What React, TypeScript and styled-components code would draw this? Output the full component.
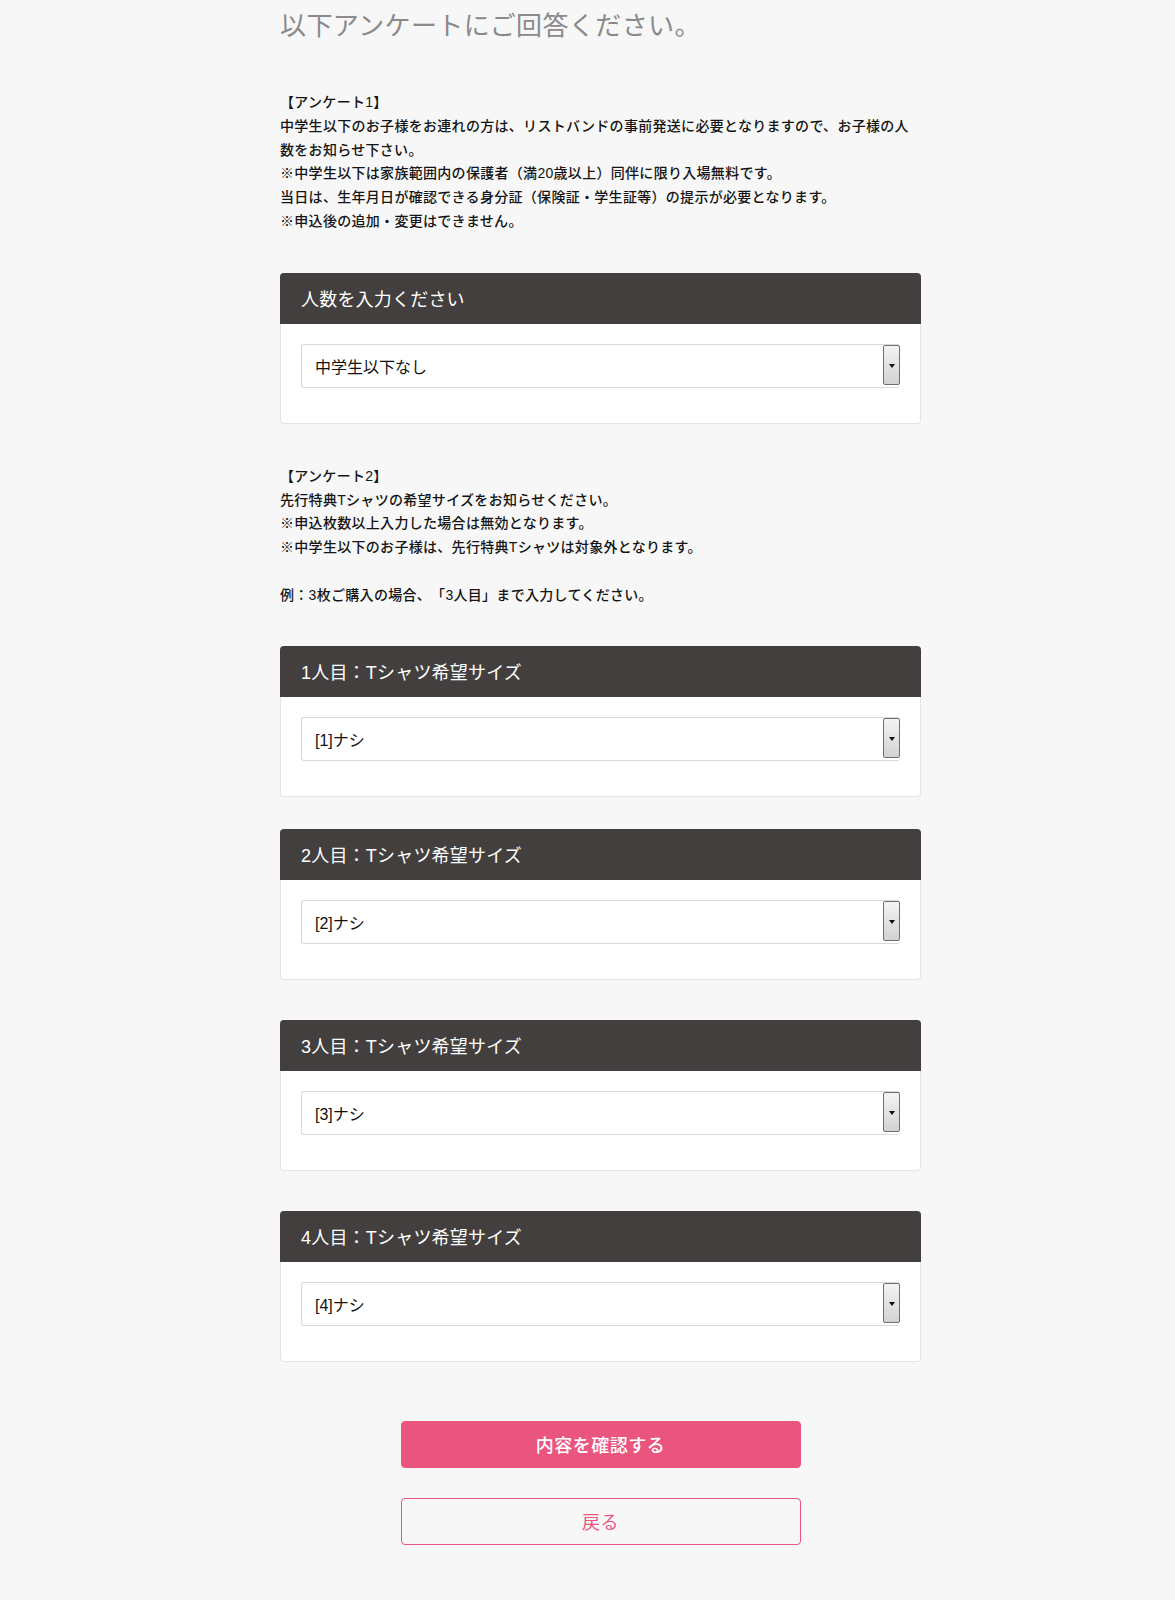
import React from "react";
import styled, { createGlobalStyle } from "styled-components";

const GlobalStyle = createGlobalStyle`
  html, body {
    margin: 0;
    padding: 0;
    background: #f7f7f7;
  }
  body {
    font-family: "Liberation Sans", "Noto Sans CJK JP", sans-serif;
    color: #161616;
    text-spacing-trim: space-all;
  }
`;

const Main = styled.main`
  width: 641px;
  margin-left: 280px;
  padding: 8px 0 55px;
  display: flex;
  flex-direction: column;
`;

const Title = styled.h1`
  margin: 0;
  font-size: 26px;
  font-weight: 400;
  line-height: 36px;
  color: #8a8a8a;
  letter-spacing: 0.4px;
`;

const Note = styled.div<{ $top: number }>`
  margin-top: ${(p) => p.$top}px;
  width: 636px;
  font-size: 14px;
  font-weight: 500;
  line-height: 23.8px;
  letter-spacing: 0.3px;
  color: #141414;
`;

const Line = styled.p`
  margin: 0;
  min-height: 23.8px;
`;

const Card = styled.section<{ $top: number }>`
  margin-top: ${(p) => p.$top}px;
  background: #fff;
  border: 1px solid #e4e4e4;
  border-top: none;
  border-radius: 4px;
`;

const CardHeader = styled.h2`
  margin: 0 -1px;
  height: 51px;
  padding: 0 21px;
  display: flex;
  align-items: center;
  background: #433f3e;
  border-radius: 4px 4px 0 0;
  color: #fff;
  font-size: 18px;
  font-weight: 400;
  letter-spacing: 0.2px;
`;

const CardBody = styled.div`
  padding: 20px 20px 35px;
`;

const SelectBox = styled.div`
  height: 44px;
  box-sizing: border-box;
  display: flex;
  align-items: stretch;
  background: #fff;
  border: 1px solid #d9d9d9;
  border-right: none;
  border-radius: 3px;
`;

const SelectValue = styled.span`
  flex: 1;
  display: flex;
  align-items: center;
  padding-left: 13px;
  font-size: 16px;
  color: #111;
`;

const ArrowButton = styled.span`
  width: 17px;
  box-sizing: border-box;
  margin: 0 0 2px;
  display: flex;
  align-items: center;
  justify-content: center;
  border: 1px solid #6f6f6f;
  border-radius: 2px;
  background: linear-gradient(#f4f4f4, #d2d2d2);

  &::after {
    content: "";
    border-left: 3.5px solid transparent;
    border-right: 3.5px solid transparent;
    border-top: 4px solid #111;
    margin-top: 2px;
  }
`;

const Actions = styled.div`
  margin-top: 59px;
  display: flex;
  flex-direction: column;
  align-items: center;
  gap: 30px;
`;

const Button = styled.button<{ $primary?: boolean }>`
  width: 400px;
  height: 47px;
  box-sizing: border-box;
  border-radius: 4px;
  border: 1px solid #e9557f;
  background: ${(p) => (p.$primary ? "#e9557f" : "transparent")};
  color: ${(p) => (p.$primary ? "#fff" : "#e9557f")};
  font-family: inherit;
  font-size: 18px;
  font-weight: ${(p) => (p.$primary ? 500 : 400)};
  letter-spacing: 0.5px;
  cursor: pointer;
`;

const note1 = [
  "【アンケート1】",
  "中学生以下のお子様をお連れの方は、リストバンドの事前発送に必要となりますので、お子様の人数をお知らせ下さい。",
  "※中学生以下は家族範囲内の保護者（満20歳以上）同伴に限り入場無料です。",
  "当日は、生年月日が確認できる身分証（保険証・学生証等）の提示が必要となります。",
  "※申込後の追加・変更はできません。",
];

const note2 = [
  "【アンケート2】",
  "先行特典Tシャツの希望サイズをお知らせください。",
  "※申込枚数以上入力した場合は無効となります。",
  "※中学生以下のお子様は、先行特典Tシャツは対象外となります。",
  "",
  "例：3枚ご購入の場合、「3人目」まで入力してください。",
];

const shirts = [
  { n: 1, top: 38 },
  { n: 2, top: 32 },
  { n: 3, top: 40 },
  { n: 4, top: 40 },
];

type SelectCardProps = {
  title: string;
  value: string;
  top: number;
};

function SelectCard({ title, value, top }: SelectCardProps) {
  return (
    <Card $top={top}>
      <CardHeader>{title}</CardHeader>
      <CardBody>
        <SelectBox>
          <SelectValue>{value}</SelectValue>
          <ArrowButton />
        </SelectBox>
      </CardBody>
    </Card>
  );
}

export default function App() {
  return (
    <>
      <GlobalStyle />
      <Main>
        <Title>以下アンケートにご回答ください。</Title>
        <Note $top={47}>
          {note1.map((l, i) => (
            <Line key={i}>{l}</Line>
          ))}
        </Note>
        <SelectCard title="人数を入力ください" value="中学生以下なし" top={39} />
        <Note $top={41}>
          {note2.map((l, i) => (
            <Line key={i}>{l}</Line>
          ))}
        </Note>
        {shirts.map((s) => (
          <SelectCard
            key={s.n}
            title={`${s.n}人目：Tシャツ希望サイズ`}
            value={`[${s.n}]ナシ`}
            top={s.top}
          />
        ))}
        <Actions>
          <Button $primary>内容を確認する</Button>
          <Button>戻る</Button>
        </Actions>
      </Main>
    </>
  );
}
